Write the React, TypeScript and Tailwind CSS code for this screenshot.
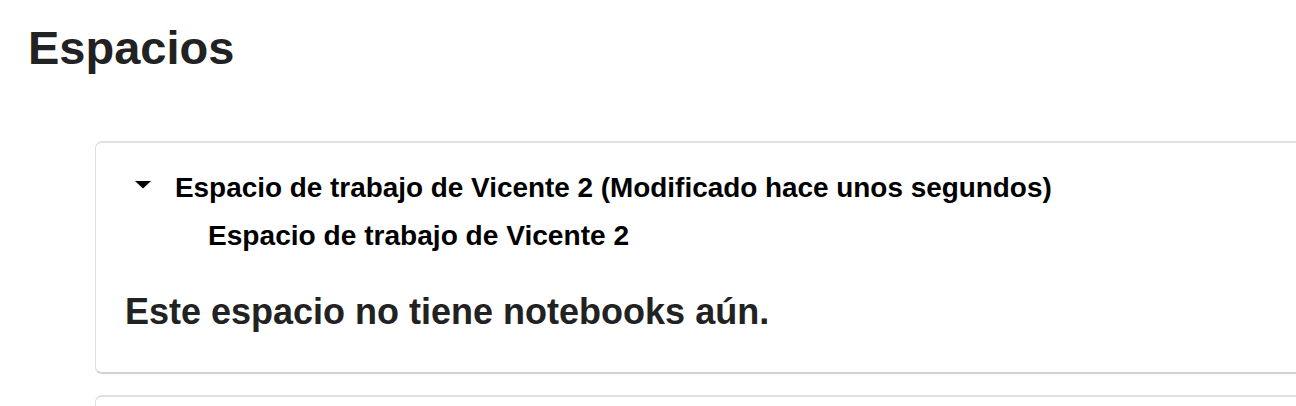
export default function App() {
  return (
    <div
      className="h-[406px] w-[1296px] overflow-hidden bg-white text-[#222]"
      style={{ fontFamily: '"Liberation Sans", Arial, sans-serif' }}
    >
      <h1 className="pl-[28px] pt-[24px] text-[47px] font-bold leading-[47px]">Espacios</h1>

      <div className="mt-[70px] flex flex-col gap-[21px] pl-[95px]">
        <div className="w-[1260px] shrink-0 rounded-[7px] border border-t-[2px] border-[#e0e0e0] border-b-[2px] border-b-[#d2d2d2] bg-white pb-[40px] pt-[29px]">
          <div className="flex items-center pl-[39px] text-black">
            <svg width="16" height="8" viewBox="0 0 16 8" className="mr-[24px] mt-[-6px]">
              <polygon points="0,0 16,0 8,7.5" fill="#000" />
            </svg>
            <span className="text-[27.9px] font-bold leading-[32px]">
              Espacio de trabajo de Vicente 2 (Modificado hace unos segundos)
            </span>
          </div>
          <div className="mt-[16px] pl-[112px] text-[28.1px] font-bold leading-[32px] text-black">
            Espacio de trabajo de Vicente 2
          </div>
          <p className="mt-[40px] pl-[29px] text-[36px] font-bold leading-[40px] text-[#222]">
            Este espacio no tiene notebooks aún.
          </p>
        </div>
        <div className="h-[60px] w-[1260px] shrink-0 rounded-[7px] border border-t-[2px] border-[#e0e0e0] bg-white" />
      </div>
    </div>
  );
}
